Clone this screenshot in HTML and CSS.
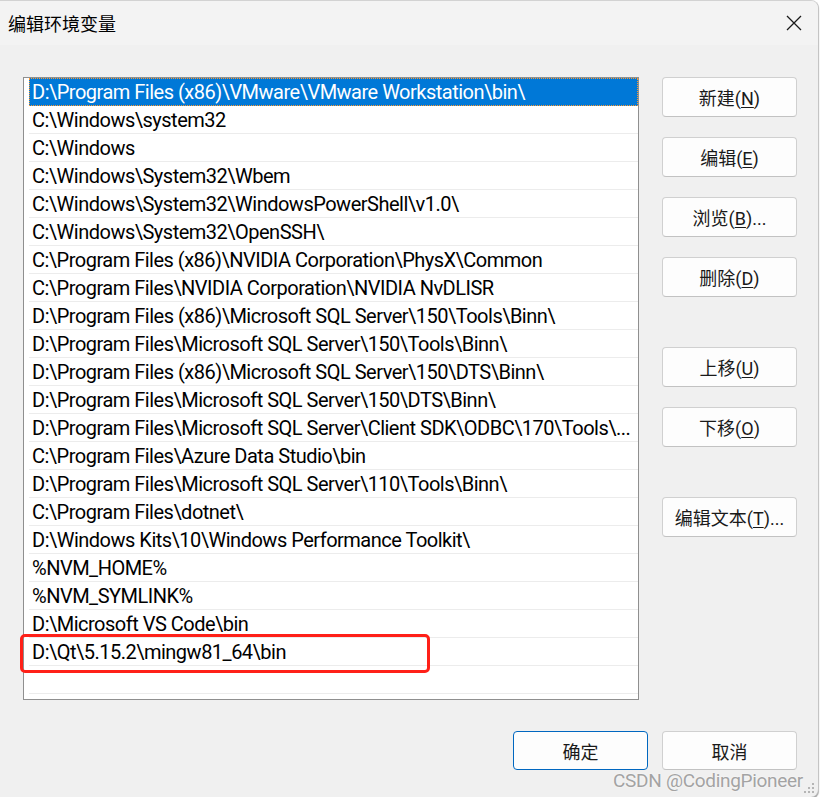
FILE: index.html
```html
<!DOCTYPE html>
<html lang="zh-CN">
<head>
    <meta charset="UTF-8">
    <meta name="viewport" content="width=device-width, initial-scale=1.0">
    <title>编辑环境变量</title>
    <link rel="stylesheet" href="styles.css">
</head>
<body>
    <div class="window">
        <div class="titlebar">
            <span class="title">编辑环境变量</span>
            <span class="close">
                <svg width="16" height="16" viewBox="0 0 16 16">
                    <path d="M1 1 L15 15 M15 1 L1 15" stroke="#1a1a1a" stroke-width="1.3" fill="none"/>
                </svg>
            </span>
        </div>
        <div class="content">
            <div class="main">
                <div class="list">
                    <div class="item selected">D:\Program Files (x86)\VMware\VMware Workstation\bin\</div>
                    <div class="item">C:\Windows\system32</div>
                    <div class="item">C:\Windows</div>
                    <div class="item">C:\Windows\System32\Wbem</div>
                    <div class="item">C:\Windows\System32\WindowsPowerShell\v1.0\</div>
                    <div class="item">C:\Windows\System32\OpenSSH\</div>
                    <div class="item">C:\Program Files (x86)\NVIDIA Corporation\PhysX\Common</div>
                    <div class="item">C:\Program Files\NVIDIA Corporation\NVIDIA NvDLISR</div>
                    <div class="item">D:\Program Files (x86)\Microsoft SQL Server\150\Tools\Binn\</div>
                    <div class="item">D:\Program Files\Microsoft SQL Server\150\Tools\Binn\</div>
                    <div class="item">D:\Program Files (x86)\Microsoft SQL Server\150\DTS\Binn\</div>
                    <div class="item">D:\Program Files\Microsoft SQL Server\150\DTS\Binn\</div>
                    <div class="item">D:\Program Files\Microsoft SQL Server\Client SDK\ODBC\170\Tools\...</div>
                    <div class="item">C:\Program Files\Azure Data Studio\bin</div>
                    <div class="item">D:\Program Files\Microsoft SQL Server\110\Tools\Binn\</div>
                    <div class="item">C:\Program Files\dotnet\</div>
                    <div class="item">D:\Windows Kits\10\Windows Performance Toolkit\</div>
                    <div class="item">%NVM_HOME%</div>
                    <div class="item">%NVM_SYMLINK%</div>
                    <div class="item">D:\Microsoft VS Code\bin</div>
                    <div class="item">D:\Qt\5.15.2\mingw81_64\bin</div>
                    <div class="item"></div>
                </div>
                <div class="side">
                    <div class="group">
                        <button class="btn">新建(<u>N</u>)</button>
                        <button class="btn">编辑(<u>E</u>)</button>
                        <button class="btn">浏览(<u>B</u>)...</button>
                        <button class="btn">删除(<u>D</u>)</button>
                    </div>
                    <div class="group">
                        <button class="btn">上移(<u>U</u>)</button>
                        <button class="btn">下移(<u>O</u>)</button>
                    </div>
                    <div class="group">
                        <button class="btn">编辑文本(<u>T</u>)...</button>
                    </div>
                </div>
            </div>
            <div class="footer">
                <button class="btn default">确定</button>
                <button class="btn">取消</button>
            </div>
        </div>
        <div class="mark"></div>
        <div class="watermark">CSDN @CodingPioneer</div>
        <svg class="grip" width="12" height="12" viewBox="0 0 12 12">
            <rect x="9" y="1" width="2" height="2" fill="#b5b5b5"/>
            <rect x="5" y="5" width="2" height="2" fill="#b5b5b5"/>
            <rect x="9" y="5" width="2" height="2" fill="#b5b5b5"/>
            <rect x="1" y="9" width="2" height="2" fill="#b5b5b5"/>
            <rect x="5" y="9" width="2" height="2" fill="#b5b5b5"/>
            <rect x="9" y="9" width="2" height="2" fill="#b5b5b5"/>
        </svg>
    </div>
</body>
</html>
```

FILE: styles.css
```css
body {
    margin: 0;
    padding: 0;
    background-color: #ffffff;
    font-family: Roboto, "Noto Sans CJK SC", sans-serif;
}
.window {
    position: relative;
    width: 818px;
    height: 796px;
    background-color: #f0f0f0;
    border-top: 1px solid #d2d2d2;
    border-right: 1px solid #c4c4c4;
    border-radius: 0 8px 8px 0;
    box-shadow: 0 2px 1px #a5a5a5;
    overflow: hidden;
}
.titlebar {
    height: 43px;
    background-color: #f3f3f3;
    display: flex;
    align-items: center;
    justify-content: space-between;
    padding: 0 16px 1px 8px;
}
.title {
    font-family: "Noto Sans CJK SC", sans-serif;
    font-size: 18px;
    color: #000;
}
.close {
    display: flex;
    width: 16px;
    height: 16px;
}
.content {
    padding: 32px 21px 0 23px;
}
.main {
    display: flex;
    gap: 23px;
}
.list {
    width: 616px;
    height: 623px;
    box-sizing: border-box;
    border: 1px solid #8f8f8f;
    background-color: #ffffff;
    padding-left: 5px;
    overflow: hidden;
}
.item {
    height: 28px;
    box-sizing: border-box;
    border-bottom: 1px solid #ececec;
    padding: 0 4px 0 3px;
    font-size: 20px;
    letter-spacing: -0.5px;
    line-height: 28px;
    color: #000;
    white-space: nowrap;
}
.item.selected {
    background-color: #0078d7;
    color: #ffffff;
    outline: 1px dotted #ff9a2e;
    outline-offset: -1px;
    border-bottom-color: #0078d7;
}
.side {
    display: flex;
    flex-direction: column;
    gap: 50px;
}
.group {
    display: flex;
    flex-direction: column;
    gap: 20px;
}
.btn {
    width: 135px;
    height: 40px;
    background-color: #fdfdfd;
    border: 1px solid #d0d0d0;
    border-bottom-color: #c2c2c2;
    border-radius: 4px;
    font-family: Roboto, "Noto Sans CJK SC", sans-serif;
    font-size: 18px;
    color: #1a1a1a;
    padding: 0;
}
.btn u {
    text-underline-offset: 2px;
}
.footer {
    display: flex;
    justify-content: flex-end;
    gap: 14px;
    margin-top: 31px;
}
.footer .btn {
    height: 39px;
}
.btn.default {
    border-color: #0067c0;
}
.mark {
    position: absolute;
    left: 20px;
    top: 633px;
    width: 410px;
    height: 39px;
    box-sizing: border-box;
    border: 3px solid #ff2018;
    border-radius: 5px;
}
.watermark {
    position: absolute;
    right: 15px;
    bottom: 5px;
    font-family: Roboto, sans-serif;
    font-size: 19px;
    letter-spacing: -0.3px;
    color: #a3a3a3;
    text-shadow: 0 0 2px #ffffff;
}
.grip {
    position: absolute;
    right: 3px;
    bottom: 3px;
}
```
